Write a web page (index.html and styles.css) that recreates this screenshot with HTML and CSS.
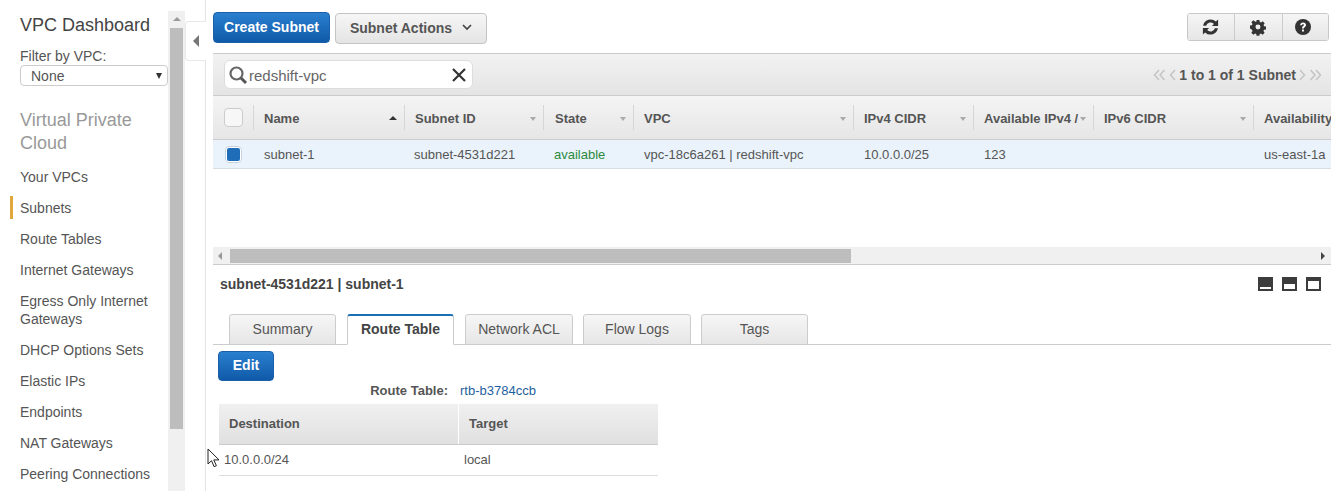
FILE: index.html
```html
<!DOCTYPE html>
<html>
  <head>
    <meta charset="utf-8">
    <title>VPC Dashboard - Subnets</title>
    <link rel="stylesheet" href="styles.css">
  </head>
  <body>
    <aside class="side">
      <div class="side-content">
        <h1 class="side-title">VPC Dashboard</h1>
        <div class="filter-label">Filter by VPC:</div>
        <div class="filter-select"><span>None</span><span class="filter-caret"></span></div>
        <h2 class="side-group">Virtual Private Cloud</h2>
        <nav class="side-nav">
          <a>Your VPCs</a>
          <a class="active">Subnets</a>
          <a>Route Tables</a>
          <a>Internet Gateways</a>
          <a>Egress Only Internet Gateways</a>
          <a>DHCP Options Sets</a>
          <a>Elastic IPs</a>
          <a>Endpoints</a>
          <a>NAT Gateways</a>
          <a>Peering Connections</a>
        </nav>
      </div>
      <div class="side-scroll">
        <div class="side-scroll-up"></div>
        <div class="side-scroll-thumb"></div>
      </div>
      <div class="collapse-col">
        <div class="collapse-tab"><span class="arrow-left"></span></div>
      </div>
    </aside>

    <main class="main">
      <div class="toolbar">
        <button class="btn-primary btn-create">Create Subnet</button>
        <button class="btn-actions">Subnet Actions
          <svg class="chevron" width="10" height="7" viewBox="0 0 10 7"><path d="M1 1l4 4 4-4" fill="none" stroke="#444" stroke-width="1.7"/></svg>
        </button>
        <div class="tool-group">
          <button class="tool-btn">
            <svg width="19" height="18" viewBox="0 0 18 18"><path d="M1.6 7.8A7.6 7.6 0 0 1 14.4 3.6L16.6 1.6V8H10.4L12.4 5.9A4.6 4.6 0 0 0 4.6 7.8Z M16.4 10.2A7.6 7.6 0 0 1 3.6 14.4L1.4 16.4V10H7.6L5.6 12.1A4.6 4.6 0 0 0 13.4 10.2Z" fill="#333"/></svg>
          </button>
          <button class="tool-btn">
            <svg width="18" height="18" viewBox="0 0 18 18"><path fill-rule="evenodd" d="M7.4 1h3.2l.4 2.3 1.3.6 2-1.3 2.2 2.2-1.3 2 .6 1.3 2.2.4v3.2l-2.3.4-.6 1.3 1.3 2-2.2 2.2-2-1.3-1.3.6-.4 2H7.4l-.4-2-1.3-.6-2 1.3-2.2-2.2 1.3-2-.6-1.3L0 10.6V7.4l2.2-.4.6-1.3-1.3-2 2.2-2.2 2 1.3L7 3.3Z M9 6.2a2.8 2.8 0 1 0 0 5.6 2.8 2.8 0 0 0 0-5.6Z" fill="#333" transform="translate(1 1) scale(.89)"/></svg>
          </button>
          <button class="tool-btn">
            <svg width="18" height="18" viewBox="0 0 18 18"><circle cx="9" cy="9" r="8" fill="#333"/><path d="M6.2 7.2C6.3 5.5 7.5 4.6 9.1 4.6c1.7 0 2.9 1 2.9 2.4 0 2-2.2 2-2.2 3.6H8c0-2.6 2-2.5 2-3.5 0-.5-.4-.9-1-.9-.7 0-1 .4-1.1 1Z M8 11.6h1.9v1.9H8Z" fill="#fff"/></svg>
          </button>
        </div>
      </div>

      <div class="filter-bar">
        <div class="search">
          <svg class="search-icon" width="20" height="20" viewBox="0 0 20 20"><circle cx="8.5" cy="8.5" r="6" fill="none" stroke="#666" stroke-width="2.2"/><path d="M13 13l5 5" stroke="#555" stroke-width="3"/></svg>
          <span class="search-text">redshift-vpc</span>
          <svg class="search-clear" width="16" height="16" viewBox="0 0 16 16"><path d="M2 2l12 12M14 2L2 14" stroke="#333" stroke-width="2.2"/></svg>
        </div>
        <div class="pager">
          <svg width="13" height="12" viewBox="0 0 13 12"><path d="M6 1L1.5 6 6 11M11.5 1L7 6l4.5 5" fill="none" stroke="#c4c4c4" stroke-width="1.5"/></svg>
          <svg width="7" height="12" viewBox="0 0 7 12"><path d="M6 1L1.5 6 6 11" fill="none" stroke="#c4c4c4" stroke-width="1.5"/></svg>
          <strong>1 to 1 of 1 Subnet</strong>
          <svg width="7" height="12" viewBox="0 0 7 12"><path d="M1 1l4.5 5L1 11" fill="none" stroke="#c4c4c4" stroke-width="1.5"/></svg>
          <svg width="13" height="12" viewBox="0 0 13 12"><path d="M1.5 1L6 6l-4.5 5M7 1l4.5 5L7 11" fill="none" stroke="#c4c4c4" stroke-width="1.5"/></svg>
        </div>
      </div>

      <div class="grid grid-head">
        <div class="cell check-cell"><span class="check"></span></div>
        <div class="cell">Name<span class="sort-up"></span></div>
        <div class="cell">Subnet ID<span class="sort"></span></div>
        <div class="cell">State<span class="sort"></span></div>
        <div class="cell">VPC<span class="sort"></span></div>
        <div class="cell">IPv4 CIDR<span class="sort"></span></div>
        <div class="cell">Available IPv4 /<span class="sort"></span></div>
        <div class="cell">IPv6 CIDR<span class="sort"></span></div>
        <div class="cell">Availability</div>
      </div>
      <div class="grid grid-row">
        <div class="cell check-cell"><span class="check checked"></span></div>
        <div class="cell">subnet-1</div>
        <div class="cell">subnet-4531d221</div>
        <div class="cell status">available</div>
        <div class="cell">vpc-18c6a261 | redshift-vpc</div>
        <div class="cell">10.0.0.0/25</div>
        <div class="cell">123</div>
        <div class="cell"></div>
        <div class="cell">us-east-1a</div>
      </div>
      <div class="grid-space"></div>
      <div class="h-scroll">
        <span class="h-arrow-left"></span>
        <div class="h-thumb"></div>
        <span class="h-arrow-right"></span>
      </div>

      <div class="detail-head">
        <strong>subnet-4531d221 | subnet-1</strong>
        <div class="panes">
          <span class="pane pane-a"></span>
          <span class="pane pane-b"></span>
          <span class="pane pane-c"></span>
        </div>
      </div>

      <div class="tabs">
        <a class="tab tab-summary">Summary</a>
        <a class="tab tab-route active">Route Table</a>
        <a class="tab tab-acl">Network ACL</a>
        <a class="tab tab-flow">Flow Logs</a>
        <a class="tab tab-tags">Tags</a>
      </div>

      <button class="btn-primary btn-edit">Edit</button>

      <div class="route-line">
        <span class="route-label">Route Table:</span>
        <a class="route-link">rtb-b3784ccb</a>
      </div>

      <div class="routes">
        <div class="routes-row routes-head">
          <div class="routes-dest">Destination</div>
          <div class="routes-target">Target</div>
        </div>
        <div class="routes-row routes-body">
          <div class="routes-dest">10.0.0.0/24</div>
          <div class="routes-target">local</div>
        </div>
      </div>
    </main>

    <svg class="cursor" width="13" height="20" viewBox="0 0 13 20"><path d="M1 1v15l3.5-3.3 2.6 6 2.3-1-2.6-5.8H12Z" fill="#fff" stroke="#222" stroke-width="1"/></svg>
  </body>
</html>
```

FILE: styles.css
```css
html, body {
  height: 100%;
}
body {
  display: flex;
  margin: 0;
  height: 491px;
  overflow: hidden;
  background: #fff;
  color: #555;
  font-family: "Liberation Sans", Arial, sans-serif;
  font-size: 14px;
}
button {
  font-family: inherit;
  cursor: pointer;
}

/* left nav */
.side {
  display: flex;
  flex: none;
  width: 205px;
  height: 491px;
  border-right: 1px solid #e4e4e4;
}
.side-content {
  flex: none;
  width: 168px;
  box-sizing: border-box;
  padding: 15px 0 0 20px;
  overflow: hidden;
}
.side-title {
  margin: 0;
  color: #444;
  font-size: 18px;
  font-weight: normal;
  line-height: 20px;
}
.filter-label {
  margin-top: 13px;
  line-height: 16px;
}
.filter-select {
  display: flex;
  justify-content: space-between;
  align-items: center;
  box-sizing: border-box;
  width: 148px;
  height: 21px;
  margin-top: 1px;
  padding: 0 5px 0 10px;
  border: 1px solid #ccc;
  border-radius: 4px;
}
.filter-caret {
  border-top: 6px solid #333;
  border-left: 3px solid transparent;
  border-right: 3px solid transparent;
}
.side-group {
  margin: 23px 0 0;
  color: #999;
  font-size: 18px;
  font-weight: normal;
  line-height: 23px;
}
.side-nav {
  margin-top: 6px;
}
.side-nav a {
  display: block;
  position: relative;
  padding: 6.5px 0;
  line-height: 18px;
  color: #555;
}
.side-nav a.active::before {
  content: "";
  position: absolute;
  left: -10px;
  top: 4px;
  bottom: 4px;
  width: 3px;
  background: #e0a83c;
}
.side-scroll {
  flex: none;
  width: 17px;
  margin-top: 11px;
  background: #f0f0f0;
}
.side-scroll-up {
  width: 0;
  margin: 6px auto 0;
  border-bottom: 4px solid #999;
  border-left: 4px solid transparent;
  border-right: 4px solid transparent;
}
.side-scroll-thumb {
  width: 13px;
  height: 401px;
  margin: 7px auto 0;
  background: #bdbdbd;
}
.collapse-col {
  flex: 1;
}
.collapse-tab {
  display: flex;
  align-items: center;
  justify-content: center;
  box-sizing: border-box;
  height: 40px;
  margin-top: 21px;
  margin-right: -1px;
  border: 1px solid #e8e8e8;
  border-right: none;
  border-radius: 4px 0 0 4px;
  background: #fff;
}
.arrow-left {
  border-right: 6px solid #777;
  border-top: 6px solid transparent;
  border-bottom: 6px solid transparent;
}

/* main column */
.main {
  flex: none;
  width: 1118px;
  margin-left: 7px;
  display: flex;
  flex-direction: column;
  min-width: 0;
}
.toolbar {
  display: flex;
  align-items: flex-start;
  box-sizing: border-box;
  height: 53px;
  padding-top: 12px;
}
.btn-primary {
  border: 1px solid #1a5fa8;
  border-radius: 4px;
  background: linear-gradient(#2a7fcf, #0f5aa8);
  color: #fff;
  font-size: 14px;
  font-weight: bold;
  padding: 0 0 2px;
}
.btn-create {
  width: 117px;
  height: 31px;
}
.btn-actions {
  display: flex;
  align-items: center;
  justify-content: center;
  gap: 10px;
  width: 152px;
  height: 31px;
  margin: 1px 0 0 5px;
  padding: 0 0 2px;
  border: 1px solid #c4c4c4;
  border-radius: 4px;
  background: linear-gradient(#f6f6f6, #e4e4e4);
  color: #555;
  font-size: 14px;
  font-weight: bold;
}
.tool-group {
  display: flex;
  margin: 1px 2px 0 auto;
  border: 1px solid #c8c8c8;
  border-radius: 3px;
  overflow: hidden;
}
.tool-btn {
  display: flex;
  align-items: center;
  justify-content: center;
  width: 47px;
  height: 26px;
  padding: 0 2px 0 0;
  border: none;
  border-right: 1px solid #ccc;
  background: linear-gradient(#f5f5f5, #e6e6e6);
}
.tool-btn:nth-child(2) {
  width: 48px;
}
.tool-btn:last-child {
  width: 45px;
  padding-right: 5px;
  border-right: none;
}

/* search + pager */
.filter-bar {
  display: flex;
  align-items: center;
  justify-content: space-between;
  box-sizing: border-box;
  height: 43px;
  padding: 0 9px 0 11px;
  border-top: 1px solid #ccc;
  border-bottom: 1px solid #ccc;
  background: linear-gradient(#f2f2f2, #e4e4e4);
}
.search {
  display: flex;
  align-items: center;
  box-sizing: border-box;
  width: 249px;
  height: 29px;
  padding: 0 5px 0 3px;
  border: 1px solid #ddd;
  border-radius: 6px;
  background: #fff;
}
.search-text {
  flex: 1;
  margin-left: 1px;
  font-size: 15px;
  padding-top: 1px;
  color: #666;
}
.pager {
  display: flex;
  align-items: center;
  gap: 3px;
  color: #555;
}
.pager strong {
  margin: 0;
}

/* subnet grid */
.grid {
  display: grid;
  grid-template-columns: 40px 151px 139px 90px 220px 120px 120px 160px 1fr;
  font-size: 13px;
}
.grid-head {
  height: 44px;
  background: linear-gradient(#f4f4f4, #e6e6e6);
  border-bottom: 1px solid #ccc;
  box-sizing: border-box;
  font-weight: bold;
  color: #555;
}
.grid-head .cell {
  padding-top: 2px;
}
.grid-head .cell:nth-child(4) {
  padding-left: 12px;
}
.grid-row {
  height: 29px;
  box-sizing: border-box;
  background: #eaf3fb;
  border-bottom: 1px solid #d5dde5;
}
.cell {
  position: relative;
  display: flex;
  align-items: center;
  padding-left: 11px;
  white-space: nowrap;
  overflow: hidden;
}
.grid-row .cell:nth-child(3) {
  padding-left: 10px;
}
.grid-head .cell::before {
  content: "";
  position: absolute;
  left: 0;
  top: 9px;
  bottom: 9px;
  width: 1px;
  background: #d6d6d6;
}
.grid-head .cell:first-child::before {
  display: none;
}
.status {
  color: #2a8a3e;
}
.grid .cell.check-cell {
  justify-content: center;
  padding: 0;
}
.check {
  box-sizing: border-box;
  width: 19px;
  height: 19px;
  border: 1px solid #ccc;
  border-radius: 4px;
  background: #f7f7f7;
}
.check.checked {
  background: #1f6cb8;
  border: 2px solid #fff;
  outline: 1px solid #c5d3e0;
  outline-offset: -1px;
  width: 17px;
  height: 17px;
}
.sort {
  position: absolute;
  right: 7px;
  top: 21px;
  border-top: 4px solid #aaa;
  border-left: 3.5px solid transparent;
  border-right: 3.5px solid transparent;
}
.sort-up {
  position: absolute;
  right: 7px;
  top: 20px;
  border-bottom: 4px solid #333;
  border-left: 4px solid transparent;
  border-right: 4px solid transparent;
}
.grid-space {
  height: 78px;
}
.h-scroll {
  display: flex;
  align-items: center;
  box-sizing: border-box;
  height: 18px;
  border-bottom: 1px solid #ccc;
  background: #f0f0f0;
}
.h-arrow-left {
  margin: 0 8px 0 5px;
  border-right: 4px solid #999;
  border-top: 4px solid transparent;
  border-bottom: 4px solid transparent;
}
.h-thumb {
  width: 621px;
  height: 14px;
  background: #bdbdbd;
}
.h-arrow-right {
  margin-left: auto;
  margin-right: 6px;
  border-left: 4px solid #444;
  border-top: 4px solid transparent;
  border-bottom: 4px solid transparent;
}

/* detail pane */
.detail-head {
  display: flex;
  align-items: center;
  justify-content: space-between;
  height: 38px;
  padding-left: 7px;
  padding-right: 10px;
  color: #444;
}
.panes {
  display: flex;
  gap: 9px;
}
.pane {
  position: relative;
  width: 15px;
  height: 14px;
  background: #3c3c3c;
}
.pane::after {
  content: "";
  position: absolute;
  left: 2px;
  right: 2px;
  background: #fff;
}
.pane-a::after {
  bottom: 2px;
  height: 2px;
}
.pane-b::after {
  bottom: 2px;
  height: 5px;
}
.pane-c::after {
  bottom: 2px;
  height: 8px;
}
.tabs {
  display: flex;
  align-items: flex-end;
  height: 42px;
  box-sizing: border-box;
  padding-left: 16px;
  border-bottom: 1px solid #ccc;
  margin-bottom: 6px;
}
.tab {
  display: flex;
  align-items: center;
  justify-content: center;
  box-sizing: border-box;
  height: 31px;
  margin-bottom: -1px;
  padding-bottom: 2px;
  border: 1px solid #ccc;
  border-radius: 3px 3px 0 0;
  background: linear-gradient(#f6f6f6, #e6e6e6);
  color: #555;
}
.tab.active {
  background: #fff;
  border-top: 2px solid #1b6fb5;
  border-bottom-color: #fff;
  font-weight: bold;
  color: #444;
}
.tab-summary { width: 107px; margin-right: 11px; }
.tab-route { width: 107px; margin-right: 11px; }
.tab-acl { width: 108px; margin-right: 10px; }
.tab-flow { width: 108px; margin-right: 10px; }
.tab-tags { width: 107px; }
.btn-edit {
  align-self: flex-start;
  width: 56px;
  height: 30px;
  margin-left: 5px;
}
.route-line {
  display: flex;
  height: 28px;
  align-items: center;
  margin-top: -5px;
  font-size: 13px;
}
.route-label {
  width: 235px;
  text-align: right;
  font-weight: bold;
  color: #555;
}
.route-link {
  margin-left: 12px;
  color: #1f5f9e;
}
.routes {
  width: 439px;
  margin-left: 6px;
  font-size: 13px;
}
.routes-row {
  display: grid;
  grid-template-columns: 239px 1fr;
}
.routes-head {
  height: 41px;
  box-sizing: border-box;
  align-items: stretch;
  background: linear-gradient(#f0f0f0, #e0e0e0);
  border-bottom: 1px solid #ccc;
  font-weight: bold;
  color: #555;
}
.routes-head .routes-dest,
.routes-head .routes-target {
  display: flex;
  align-items: center;
  padding-left: 10px;
  padding-bottom: 2px;
}
.routes-head .routes-target {
  border-left: 1px solid #fff;
}
.routes-body {
  height: 31px;
  box-sizing: border-box;
  align-items: center;
  padding-bottom: 2px;
  border-bottom: 1px solid #ddd;
}
.routes-body .routes-dest {
  padding-left: 5px;
}
.routes-body .routes-target {
  padding-left: 6px;
}
.cursor {
  position: absolute;
  left: 207px;
  top: 448px;
}
```
